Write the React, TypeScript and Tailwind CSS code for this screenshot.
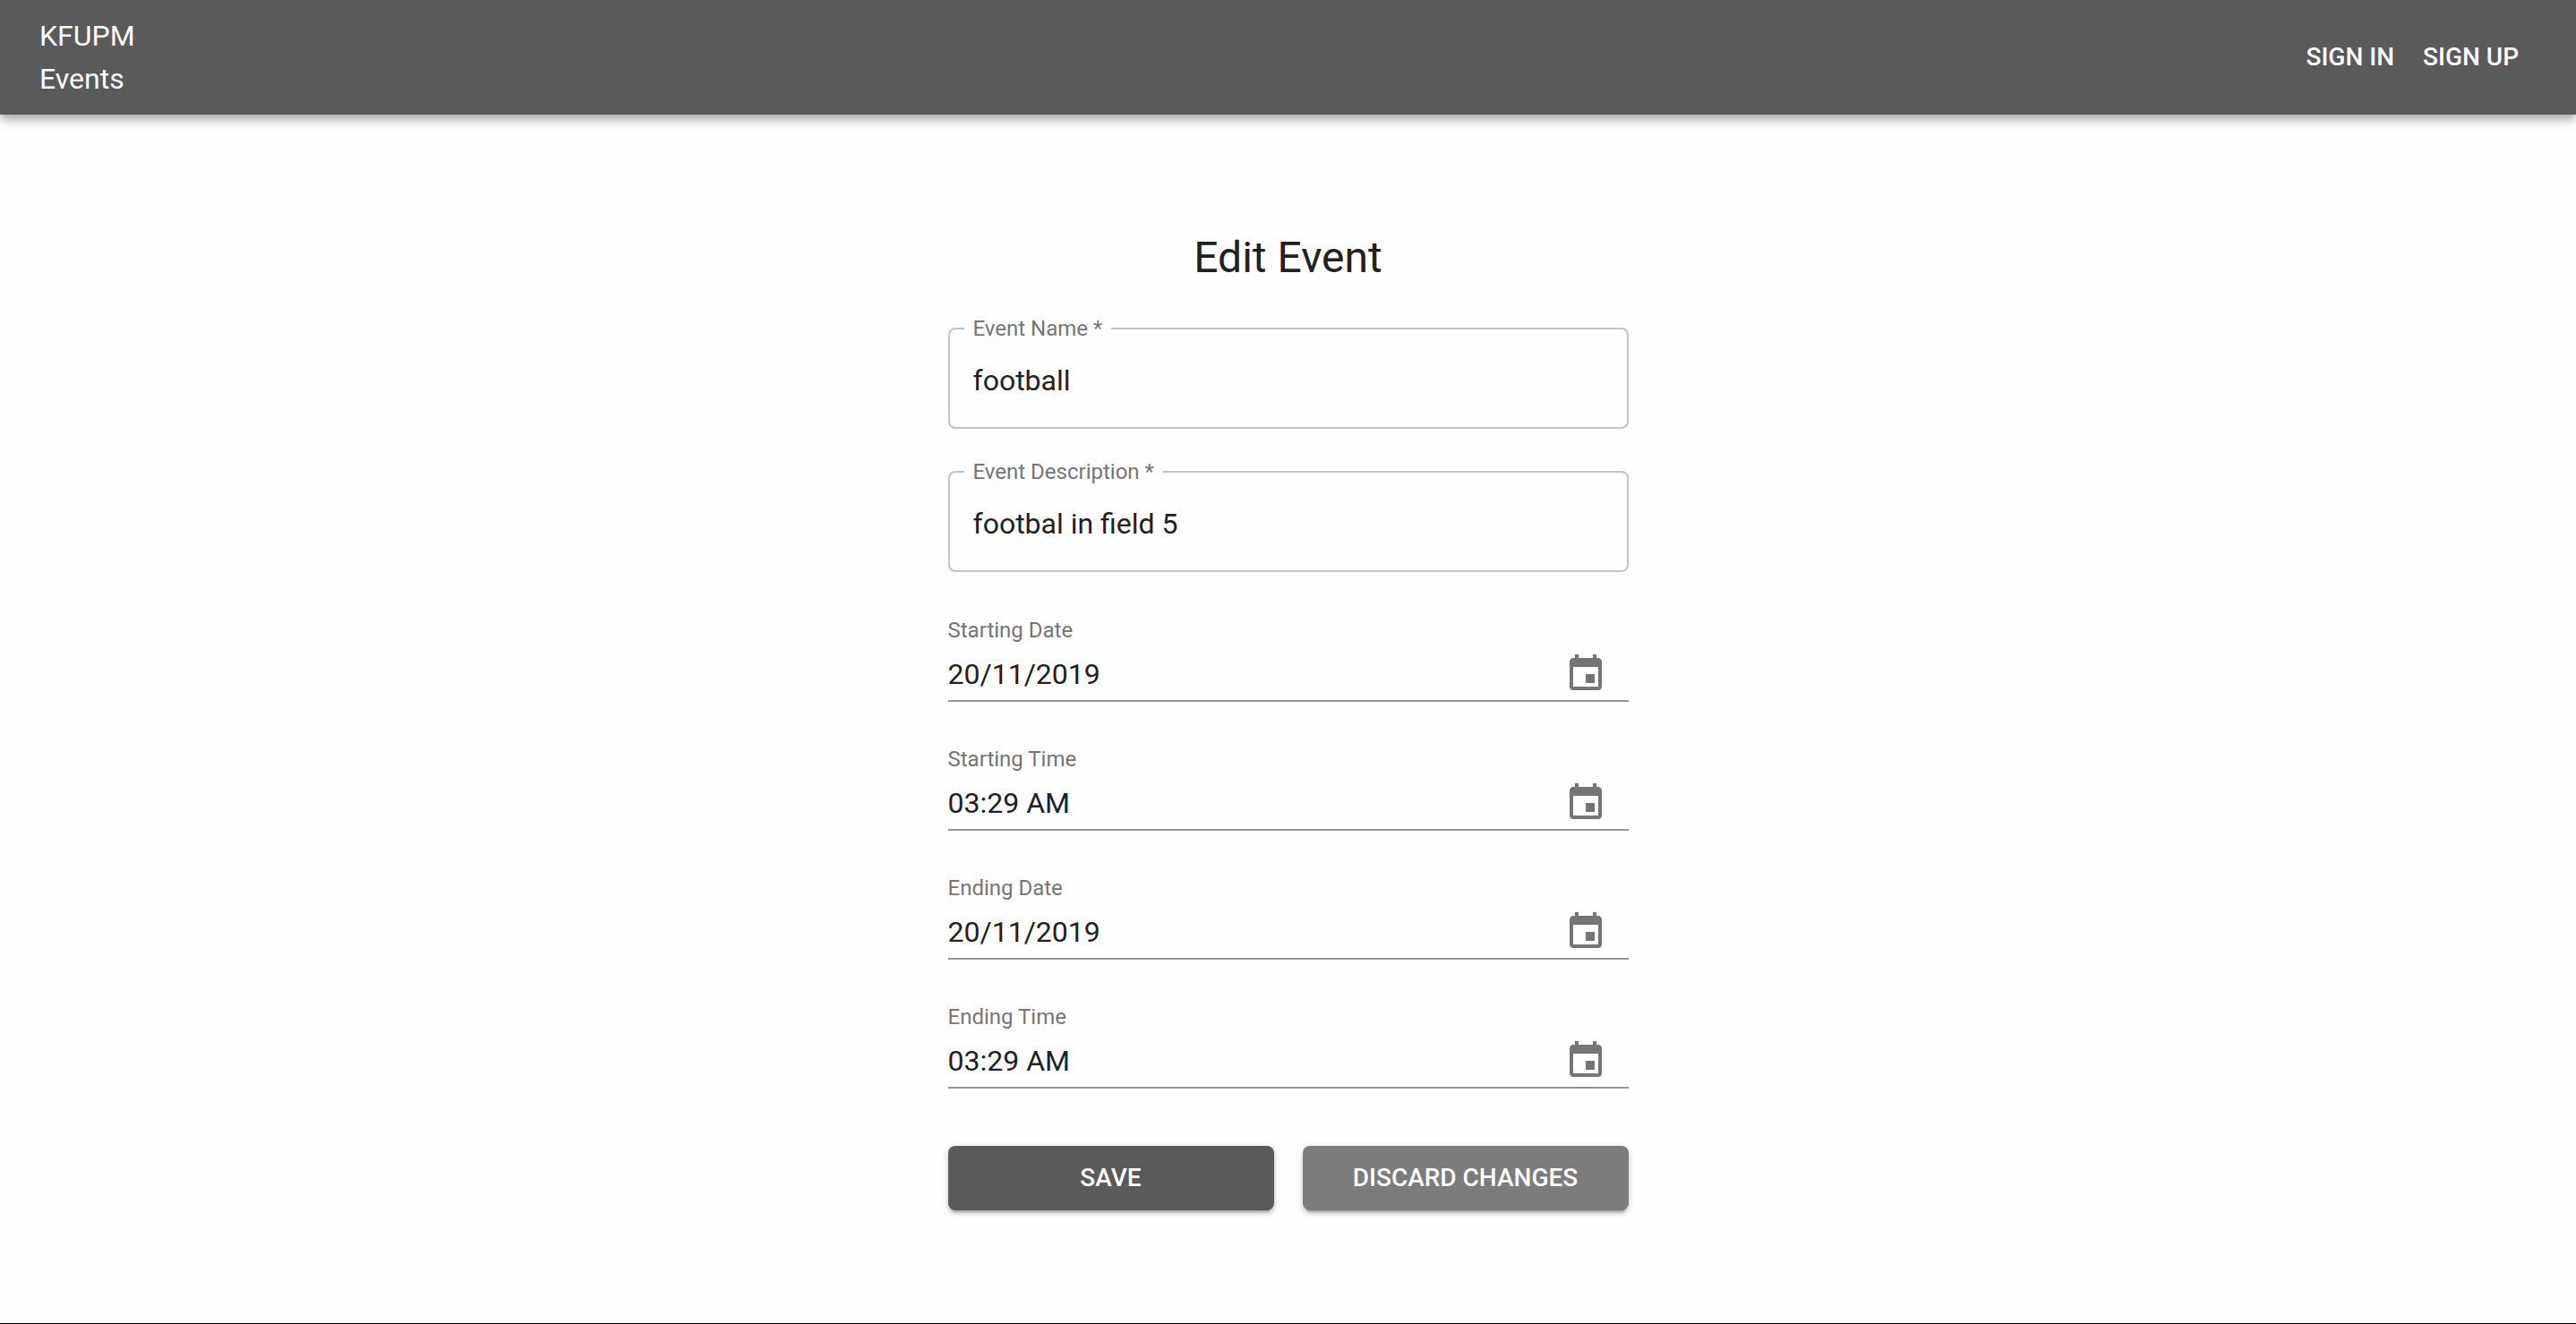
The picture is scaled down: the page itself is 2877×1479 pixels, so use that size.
import { useId, useState } from "react";

type FieldProps = { label: string; initial: string };

function OutlinedField({ label, initial }: FieldProps) {
  const id = useId();
  const [value, setValue] = useState(initial);
  return (
    <fieldset className="min-w-0 rounded-lg border-2 border-[#c4c4c4] pb-[10px]">
      <legend className="ml-4 px-[10px] text-2xl leading-8 text-[#757575]">
        <label htmlFor={id}>{label} *</label>
      </legend>
      <input
        id={id}
        type="text"
        required
        value={value}
        onChange={(e) => setValue(e.target.value)}
        className="block h-[84px] w-full bg-transparent px-[26px] text-[32px] outline-none"
      />
    </fieldset>
  );
}

function PickerField({ label, initial }: FieldProps) {
  const id = useId();
  const [value, setValue] = useState(initial);
  return (
    <div className="flex flex-col gap-1">
      <label htmlFor={id} className="text-2xl leading-8 text-[#757575]">
        {label}
      </label>
      <div className="flex h-[60px] items-center border-b-2 border-[#949494] pr-6">
        <input
          id={id}
          type="text"
          value={value}
          onChange={(e) => setValue(e.target.value)}
          className="h-full min-w-0 flex-1 bg-transparent text-[32px] outline-none"
        />
        <button type="button" aria-label={`Choose ${label.toLowerCase()}`} className="text-[#757575]">
          <svg viewBox="0 0 24 24" className="size-12" fill="currentColor" aria-hidden="true">
            <path d="M17 12h-5v5h5v-5zM16 1v2H8V1H6v2H5c-1.11 0-1.99.9-1.99 2L3 19c0 1.1.89 2 2 2h14c1.1 0 2-.9 2-2V5c0-1.1-.9-2-2-2h-1V1h-2zm3 18H5V8h14v11z" />
          </svg>
        </button>
      </div>
    </div>
  );
}

const pickers: FieldProps[] = [
  { label: "Starting Date", initial: "20/11/2019" },
  { label: "Starting Time", initial: "03:29 AM" },
  { label: "Ending Date", initial: "20/11/2019" },
  { label: "Ending Time", initial: "03:29 AM" },
];

const raised =
  "h-[72px] rounded-lg text-[28px] font-medium text-white shadow-[0_6px_2px_-4px_rgba(0,0,0,0.2),0_4px_4px_0_rgba(0,0,0,0.14),0_2px_10px_0_rgba(0,0,0,0.12)]";

export default function App() {
  return (
    <div className="flex min-h-screen flex-col border-b border-black bg-[#fefefe] font-['Roboto',sans-serif] text-[#212121]">
      <header className="flex items-center justify-between bg-[#5a5a5a] py-4 pr-12 pl-11 text-white shadow-[0_4px_8px_-2px_rgba(0,0,0,0.2),0_8px_10px_0_rgba(0,0,0,0.14),0_2px_20px_0_rgba(0,0,0,0.12)]">
        <a href="#" className="text-[32px] leading-[48px]">
          KFUPM
          <br />
          Events
        </a>
        <nav className="flex items-center text-[28px] font-medium">
          <a href="#signin" className="px-4">SIGN IN</a>
          <a href="#signup" className="px-4">SIGN UP</a>
        </nav>
      </header>

      <main className="mx-auto w-full max-w-[760px] pt-32">
        <h1 className="text-center text-5xl leading-[64px]">Edit Event</h1>
        <form onSubmit={(e) => e.preventDefault()} className="mt-[31px]">
          <div className="flex flex-col gap-8">
            <OutlinedField label="Event Name" initial="football" />
            <OutlinedField label="Event Description" initial="footbal in field 5" />
          </div>
          <div className="mt-[49px] flex flex-col gap-12">
            {pickers.map((p) => (
              <PickerField key={p.label} {...p} />
            ))}
          </div>
          <div className="mt-16 grid grid-cols-2 gap-8">
            <button type="submit" className={`${raised} bg-[#5a5a5a]`}>
              SAVE
            </button>
            <button type="button" className={`${raised} bg-[#7c7c7c]`}>
              DISCARD CHANGES
            </button>
          </div>
        </form>
      </main>
    </div>
  );
}
